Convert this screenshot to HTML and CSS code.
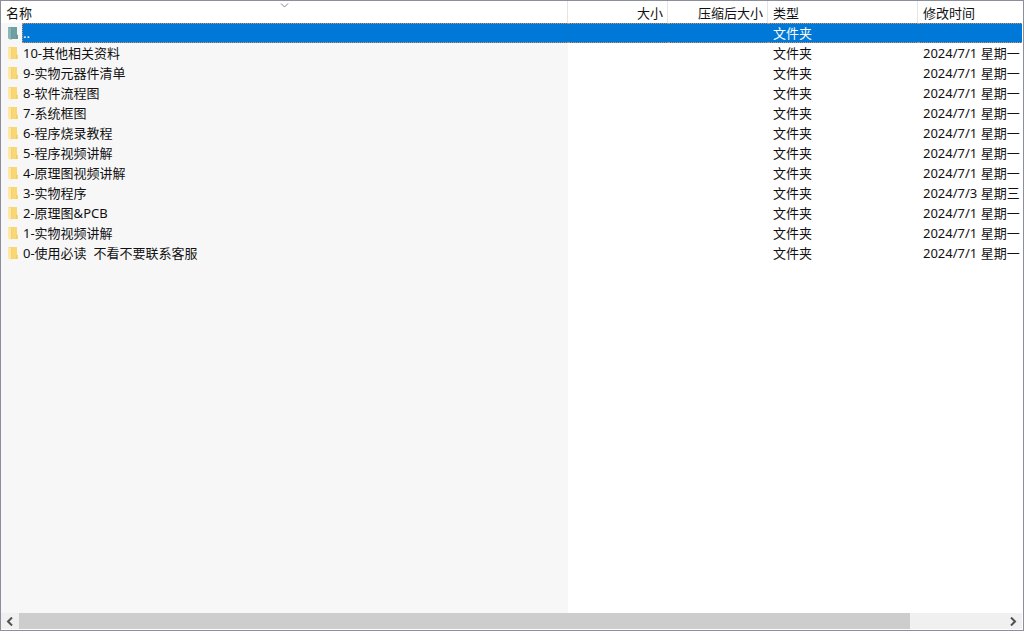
FILE: index.html
```html
<!DOCTYPE html>
<html lang="zh-CN">
<head>
  <meta charset="UTF-8">
  <meta name="viewport" content="width=device-width, initial-scale=1.0">
  <title>文件列表</title>
  <link rel="stylesheet" href="styles.css">
</head>
<body>
  <svg class="symbols" aria-hidden="true">
    <symbol id="folder" viewBox="0 0 12 14">
      <path class="back" d="M1 1h9v7.5l1 .5v4H4z"/>
      <path class="front" d="M1 1l3.5 1.5V14L1 12.5z"/>
      <path class="edge" d="M4.5 2.5H5V13h-.5zM9.5 9h.5v4h-.5z"/>
    </symbol>
  </svg>

  <div class="window">
    <div class="list">
      <table>
        <colgroup>
          <col class="col-icon">
          <col class="col-name">
          <col class="col-size">
          <col class="col-size">
          <col class="col-type">
          <col class="col-date">
        </colgroup>
        <thead>
          <tr>
            <th colspan="2">
              <button type="button">名称</button>
              <svg class="sort" viewBox="0 0 9 5"><path d="M1 0.5l3.5 3.5L8 0.5"/></svg>
            </th>
            <th class="right"><button type="button">大小</button></th>
            <th class="right"><button type="button">压缩后大小</button></th>
            <th><button type="button">类型</button></th>
            <th><button type="button">修改时间</button></th>
          </tr>
        </thead>
        <tbody>
          <tr class="selected"><td class="icon"><svg class="up"><use href="#folder"/></svg></td><td class="name">..</td><td></td><td></td><td>文件夹</td><td></td></tr>
          <tr><td class="icon"><svg><use href="#folder"/></svg></td><td class="name">10-其他相关资料</td><td></td><td></td><td>文件夹</td><td>2024/7/1 星期一</td></tr>
          <tr><td class="icon"><svg><use href="#folder"/></svg></td><td class="name">9-实物元器件清单</td><td></td><td></td><td>文件夹</td><td>2024/7/1 星期一</td></tr>
          <tr><td class="icon"><svg><use href="#folder"/></svg></td><td class="name">8-软件流程图</td><td></td><td></td><td>文件夹</td><td>2024/7/1 星期一</td></tr>
          <tr><td class="icon"><svg><use href="#folder"/></svg></td><td class="name">7-系统框图</td><td></td><td></td><td>文件夹</td><td>2024/7/1 星期一</td></tr>
          <tr><td class="icon"><svg><use href="#folder"/></svg></td><td class="name">6-程序烧录教程</td><td></td><td></td><td>文件夹</td><td>2024/7/1 星期一</td></tr>
          <tr><td class="icon"><svg><use href="#folder"/></svg></td><td class="name">5-程序视频讲解</td><td></td><td></td><td>文件夹</td><td>2024/7/1 星期一</td></tr>
          <tr><td class="icon"><svg><use href="#folder"/></svg></td><td class="name">4-原理图视频讲解</td><td></td><td></td><td>文件夹</td><td>2024/7/1 星期一</td></tr>
          <tr><td class="icon"><svg><use href="#folder"/></svg></td><td class="name">3-实物程序</td><td></td><td></td><td>文件夹</td><td>2024/7/3 星期三</td></tr>
          <tr><td class="icon"><svg><use href="#folder"/></svg></td><td class="name">2-原理图&amp;PCB</td><td></td><td></td><td>文件夹</td><td>2024/7/1 星期一</td></tr>
          <tr><td class="icon"><svg><use href="#folder"/></svg></td><td class="name">1-实物视频讲解</td><td></td><td></td><td>文件夹</td><td>2024/7/1 星期一</td></tr>
          <tr><td class="icon"><svg><use href="#folder"/></svg></td><td class="name">0-使用必读&nbsp; 不看不要联系客服</td><td></td><td></td><td>文件夹</td><td>2024/7/1 星期一</td></tr>
          <tr class="rest"><td class="icon"></td><td class="name"></td><td></td><td></td><td></td><td></td></tr>
        </tbody>
      </table>
    </div>

    <div class="scrollbar">
      <button type="button" aria-label="向左滚动"><svg viewBox="0 0 8 9"><path d="M6 0.5l-4 4 4 4"/></svg></button>
      <div class="track"><div class="thumb"></div></div>
      <button type="button" aria-label="向右滚动"><svg viewBox="0 0 8 9"><path d="M2 0.5l4 4-4 4"/></svg></button>
    </div>
  </div>
</body>
</html>
```

FILE: styles.css
```css
* { box-sizing: border-box; }
body {
  margin: 0;
  font: 13px/18px "Noto Sans", "Noto Sans CJK SC", sans-serif;
  color: #111;
  background: #fff;
}
.symbols { position: absolute; width: 0; height: 0; }

.window {
  display: flex;
  flex-direction: column;
  height: 100vh;
  padding: 0 1px 1px 0;
  border: 1px solid #8c8e9c;
}
.list { flex: 1; min-height: 0; overflow: hidden; }

table {
  width: 100%; height: 100%;
  table-layout: fixed;
  border-collapse: separate; border-spacing: 0;
}
.col-icon { width: 21px; }
.col-size { width: 100px; }
.col-type { width: 150px; }
.col-date { width: 104px; }

th {
  position: relative;
  height: 22px;
  padding: 0 5px;
  text-align: left;
  font-weight: normal;
  border-right: 1px solid #e5e5e5;
}
th:last-child { border-right: none; }
th.right { text-align: right; padding-right: 4px; }
th button {
  display: inline-block;
  padding: 0;
  border: none;
  background: none;
  font: inherit;
  color: inherit;
  vertical-align: middle;
}
/* sort arrow sits over the top edge of the header */
.sort {
  position: absolute;
  top: 2px; left: calc(50% - 4px);
  width: 9px; height: 5px;
  fill: none; stroke: #858585;
}

td {
  height: 20px;
  padding: 0 0 0 5px;
  white-space: nowrap;
  overflow: hidden;
}
td.icon { padding: 0 0 0 6px; background: #f7f7f7; }
td.name { padding-left: 1px; background: #f7f7f7; }
td.icon svg { display: block; width: 12px; height: 14px; }
.back { fill: var(--back, #f8d775); }
.front { fill: var(--front, #ffe8a6); }
.edge { fill: var(--edge, #edc25a); }
.up { --back: #6fa0a1; --front: #8ab6b8; --edge: #5c8b8c; }

.selected td:not(.icon) {
  background: #0078d7;
  color: #fff;
  border-top: 1px dotted #d09060;
  border-bottom: 1px dotted #d09060;
}
.selected td.name { padding-left: 0; border-left: 1px dotted #d09060; }
.rest td { height: auto; }

.scrollbar { display: flex; height: 16px; background: #f0f0f0; }
.scrollbar button {
  width: 18px;
  padding: 0;
  border: none;
  background: none;
  display: flex;
  align-items: center;
  justify-content: center;
}
.scrollbar svg { width: 8px; height: 9px; fill: none; stroke: #505050; stroke-width: 2; }
.track { flex: 1; }
.thumb { width: 90.5%; height: 100%; background: #cdcdcd; }
```
